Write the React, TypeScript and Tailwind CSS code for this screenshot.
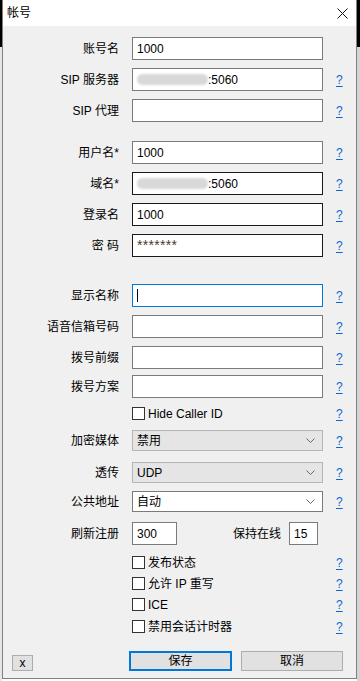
import React from "react";

const font = "font-['Liberation_Sans','Noto_Sans_CJK_SC',sans-serif]";

function Help() {
  return (
    <span className="ml-[13px] text-[12px] leading-none text-[#0b66d0] underline underline-offset-2">?</span>
  );
}

function Row({
  label,
  children,
  help = true,
  className = "",
}: {
  label?: React.ReactNode;
  children: React.ReactNode;
  help?: boolean;
  className?: string;
}) {
  return (
    <div className={`flex items-center ${className}`}>
      <div className="w-[116px] text-right text-[12px] text-black whitespace-nowrap">{label}</div>
      <div className="ml-[13px] w-[191px] flex items-center">{children}</div>
      {help && <Help />}
    </div>
  );
}

function TextBox({
  value,
  dark = false,
  focus = false,
  blur = false,
}: {
  value?: string;
  dark?: boolean;
  focus?: boolean;
  blur?: boolean;
}) {
  const border = focus ? "border-[#0078d7]" : dark ? "border-[#1a1a1a]" : "border-[#7a7a7a]";
  return (
    <div className={`w-full h-[23px] bg-white border ${border} flex items-center pl-[4px] text-[12px] text-black`}>
      {blur && <div className="w-[71px] h-[11px] rounded-full bg-[#d8d8d8] blur-[1px]" />}
      {focus && <div className="w-px h-[13px] bg-black" />}
      {value && <span>{value}</span>}
    </div>
  );
}

function Chevron() {
  return (
    <svg width="9" height="5" viewBox="0 0 9 5" className="mr-[7px]">
      <polyline points="0.5,0.5 4.5,4.5 8.5,0.5" fill="none" stroke="#666" strokeWidth="1" />
    </svg>
  );
}

function Select({ value, disabled = false }: { value: string; disabled?: boolean }) {
  return (
    <div
      className={`w-full h-[21px] border flex items-center justify-between pl-[4px] text-[12px] text-black ${
        disabled ? "bg-[#e5e5e5] border-[#b5b5b5]" : "bg-white border-[#7a7a7a]"
      }`}
    >
      <span>{value}</span>
      <Chevron />
    </div>
  );
}

function Check({ label, className = "" }: { label: string; className?: string }) {
  return (
    <div className={`flex items-center h-[13px] ${className}`}>
      <div className="w-[116px]" />
      <div className="ml-[13px] w-[191px] flex items-center">
        <div className="w-[13px] h-[13px] bg-white border border-[#333]" />
        <span className="ml-[3px] text-[12px] text-black whitespace-nowrap">{label}</span>
      </div>
      <Help />
    </div>
  );
}

export default function App() {
  return (
    <div className={`w-[360px] h-[681px] flex overflow-hidden ${font}`}>
      {/* left edge of the desktop behind */}
      <div className="w-[2px] flex flex-col">
        <div className="h-[47px] bg-black" />
        <div className="flex-1 bg-[#e6e6e6]" />
      </div>

      {/* dialog window */}
      <div className="w-[355px] h-[679px] flex flex-col border-x border-b border-[#808080] bg-[#f0f0f0]">
        {/* title bar */}
        <div className="h-[26px] bg-white flex items-center justify-between pl-[4px] pr-[8px]">
          <span className="text-[12px] text-black">帐号</span>
          <svg width="11" height="11" viewBox="0 0 11 11">
            <path d="M0.5 0.5 L10.5 10.5 M10.5 0.5 L0.5 10.5" stroke="#111" strokeWidth="1" />
          </svg>
        </div>

        {/* body */}
        <div className="flex flex-col">
          <Row label="账号名" help={false} className="mt-[11px]">
            <TextBox value="1000" />
          </Row>
          <Row label="SIP 服务器" className="mt-[8px]">
            <TextBox blur value=":5060" />
          </Row>
          <Row label="SIP 代理" className="mt-[8px]">
            <TextBox />
          </Row>

          <Row label="用户名*" className="mt-[19px]">
            <TextBox value="1000" />
          </Row>
          <Row label="域名*" className="mt-[8px]">
            <TextBox blur dark value=":5060" />
          </Row>
          <Row label="登录名" className="mt-[8px]">
            <TextBox dark value="1000" />
          </Row>
          <Row label="密 码" className="mt-[8px]">
            <div className="w-full h-[23px] bg-white border border-[#1a1a1a] flex items-start pl-[4px] pt-[3px] text-[14px] leading-none text-[#4a3a28] tracking-[0.3px]">
              *******
            </div>
          </Row>

          <Row label="显示名称" className="mt-[27px]">
            <TextBox focus />
          </Row>
          <Row label="语音信箱号码" className="mt-[8px]">
            <TextBox />
          </Row>
          <Row label="拨号前缀" className="mt-[8px]">
            <TextBox />
          </Row>
          <Row label="拨号方案" className="mt-[6px]">
            <TextBox />
          </Row>

          <Check label="Hide Caller ID" className="mt-[9px]" />

          <Row label="加密媒体" className="mt-[10px]">
            <Select value="禁用" disabled />
          </Row>
          <Row label="透传" className="mt-[11px]">
            <Select value="UDP" disabled />
          </Row>
          <Row label="公共地址" className="mt-[8px]">
            <Select value="自动" />
          </Row>

          <div className="flex items-center mt-[10px]">
            <div className="w-[116px] text-right text-[12px] text-black">刷新注册</div>
            <div className="ml-[13px] w-[45px] h-[23px] bg-white border border-[#7a7a7a] flex items-center pl-[4px] text-[12px] text-black">
              300
            </div>
            <div className="ml-[56px] text-[12px] text-black">保持在线</div>
            <div className="ml-[8px] w-[29px] h-[23px] bg-white border border-[#7a7a7a] flex items-center pl-[4px] text-[12px] text-black">
              15
            </div>
          </div>

          <Check label="发布状态" className="mt-[11px]" />
          <Check label="允许 IP 重写" className="mt-[8px]" />
          <Check label="ICE" className="mt-[8px]" />
          <Check label="禁用会话计时器" className="mt-[9px]" />

          <div className="flex items-center mt-[18px]">
            <div className="ml-[9px] w-[21px] h-[16px] mt-[3px] bg-[#e1e1e1] border border-[#adadad] flex items-center justify-center text-[12px] leading-none text-black">
              x
            </div>
            <div className="ml-[96px] w-[103px] h-[20px] bg-[#e1e1e1] border-2 border-[#0078d7] flex items-center justify-center text-[12px] text-black">
              保存
            </div>
            <div className="ml-[9px] w-[102px] h-[20px] bg-[#e1e1e1] border border-[#adadad] flex items-center justify-center text-[12px] text-black">
              取消
            </div>
          </div>
        </div>
      </div>

      {/* right edge of the desktop behind */}
      <div className="w-[3px] flex flex-col">
        <div className="h-[47px] bg-black" />
        <div className="flex-1 bg-[#d4d4d4]" />
      </div>
    </div>
  );
}
